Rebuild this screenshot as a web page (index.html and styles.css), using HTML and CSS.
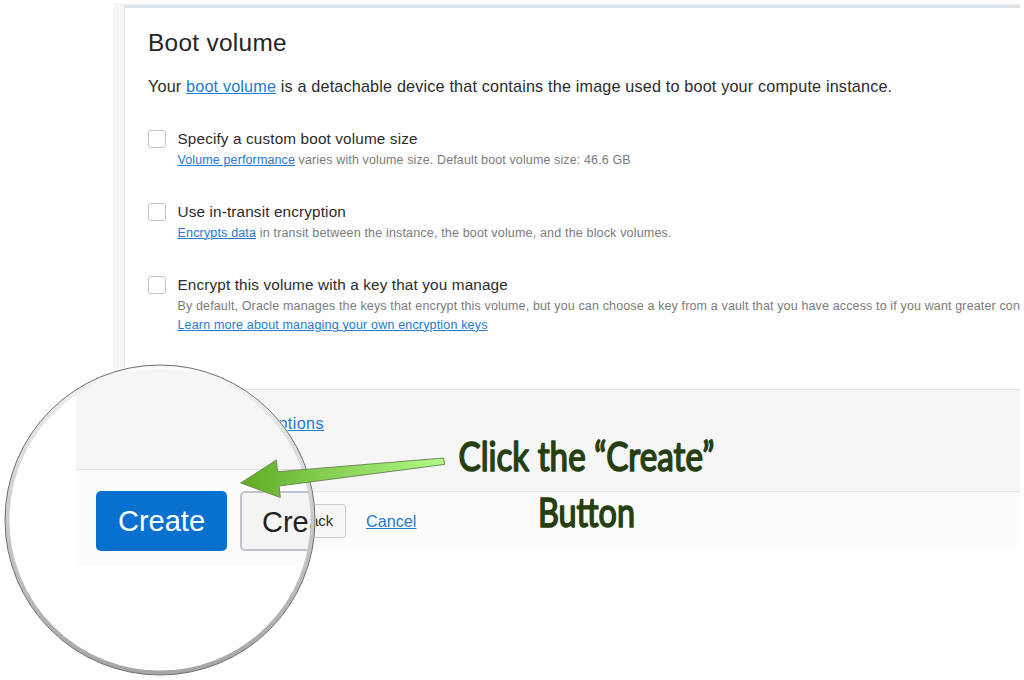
FILE: index.html
```html
<!DOCTYPE html>
<html lang="en">
<head>
<meta charset="utf-8">
<title>Boot volume</title>
<link rel="stylesheet" href="styles.css">
</head>
<body>
<div class="page">
  <main class="card">
    <h1 class="title">Boot volume</h1>
    <p class="intro">Your <a href="#">boot volume</a> is a detachable device that contains the image used to boot your compute instance.</p>
    <div class="option">
      <span class="box"></span>
      <div class="detail">
        <div class="label">Specify a custom boot volume size</div>
        <div class="hint"><a href="#">Volume performance</a> varies with volume size. Default boot volume size: 46.6 GB</div>
      </div>
    </div>
    <div class="option">
      <span class="box"></span>
      <div class="detail">
        <div class="label">Use in-transit encryption</div>
        <div class="hint wide"><a href="#">Encrypts data</a> in transit between the instance, the boot volume, and the block volumes.</div>
      </div>
    </div>
    <div class="option">
      <span class="box"></span>
      <div class="detail">
        <div class="label">Encrypt this volume with a key that you manage</div>
        <div class="hint long">By default, Oracle manages the keys that encrypt this volume, but you can choose a key from a vault that you have access to if you want greater con</div>
        <div class="hint wide"><a href="#">Learn more about managing your own encryption keys</a></div>
      </div>
    </div>
  </main>
  <section class="advanced"><a href="#">options</a></section>
  <footer class="actions">
    <span class="back">Back</span>
    <a class="cancel" href="#">Cancel</a>
  </footer>
</div>

<div class="lens">
  <div class="lens-view">
    <div class="lens-top"></div>
    <div class="lens-bar">
      <span class="big primary">Create</span>
      <span class="big secondary">Create</span>
    </div>
  </div>
  <svg class="lens-ring" viewBox="0 0 312 312">
    <defs>
      <linearGradient id="ring" x1="0" y1="0" x2="0" y2="1">
        <stop offset="0" stop-color="#fbfbfb"/>
        <stop offset=".12" stop-color="#e9e9e9"/>
        <stop offset=".5" stop-color="#cacaca"/>
        <stop offset="1" stop-color="#a6a6a6"/>
      </linearGradient>
    </defs>
    <circle cx="156" cy="156" r="152.7" fill="none" stroke="url(#ring)" stroke-width="4.2"/>
    <circle cx="156" cy="156" r="155" fill="none" stroke="#6c6c6c" stroke-width="1"/>
  </svg>
</div>

<svg class="notes" viewBox="0 0 1024 680">
  <defs>
    <linearGradient id="arrow" x1="0" y1="0" x2="1" y2="0">
      <stop offset="0" stop-color="#5eab22"/>
      <stop offset=".4" stop-color="#84cd50"/>
      <stop offset="1" stop-color="#b1fa86"/>
    </linearGradient>
  </defs>
  <path d="M240.7 483 276.3 460l1.3 11.7L443.7 458l.8 6.4L279 486l1.3 11.5Z" fill="url(#arrow)" stroke="#6d8d58" stroke-width="1"/>
  <g class="hand">
    <text x="458.5" y="471" textLength="256" lengthAdjust="spacingAndGlyphs">Click the “Create”</text>
    <text x="538" y="527" textLength="97" lengthAdjust="spacingAndGlyphs">Button</text>
  </g>
</svg>
</body>
</html>
```
FILE: styles.css
```css
* { box-sizing: border-box; }
body {
  margin: 0;
  width: 1024px;
  height: 680px;
  overflow: hidden;
  background: #fff;
  color: #2b2b2b;
  font-family: "Liberation Sans", Arial, sans-serif;
}
a { color: #2479d0; text-decoration: underline; text-underline-offset: 1px; text-decoration-thickness: 1px; }
.page {
  margin: 3px 4px 0 113px;
  height: 542px;
  background: #f6f6f6;
  display: flex;
  flex-direction: column;
}
.card {
  height: 384px;
  margin: 2px 0 0 11px;
  padding: 23px 0 0 23px;
  background: #fff;
  border-left: 1px solid #e3e5e6;
  border-top: 3px solid #dfe3e6;
  overflow: hidden;
  white-space: nowrap;
}
.title { margin: 0; font-size: 24.4px; font-weight: 400; line-height: 24px; letter-spacing: .3px; color: #242424; }
.intro { margin: 21px 0 0; font-size: 16.2px; line-height: 20px; letter-spacing: .17px; }
.option { display: flex; gap: 11.5px; height: 73px; }
.intro + .option { margin-top: 32px; }
.box { flex: none; width: 18px; height: 18px; margin-top: 2px; border: 1px solid #c0c5cb; border-radius: 3px; }
.label { margin-bottom: 2px; font-size: 15.3px; line-height: 21px; letter-spacing: .14px; }
.hint { font-size: 12.5px; line-height: 19px; letter-spacing: .12px; color: #7b7b7b; }
.wide { letter-spacing: .17px; }
.long { letter-spacing: .14px; }
.advanced { height: 103px; padding: 23px 0 0 156px; border-top: 1px solid #e3e3e3; border-bottom: 1px solid #e6e6e6; font-size: 16.2px; line-height: 20px; letter-spacing: .4px; }
.actions { flex: 1; display: flex; align-items: flex-start; gap: 20px; padding: 12px 0 0 163px; background: #fcfcfc; }
.back { width: 70px; height: 34px; padding-right: 12px; text-align: right; font-size: 14.7px; line-height: 32px; border: 1px solid #c9cdd2; border-radius: 3px; background: #f6f6f6; }
.cancel { font-size: 16.2px; line-height: 34px; }

.lens { position: absolute; left: 4px; top: 364px; width: 312px; height: 312px; background: #fff; border-radius: 50%; display: flex; }
.lens-view {
  width: 304px;
  height: 304px;
  margin: 4px;
  padding-left: 68px;
  border-radius: 50%;
  overflow: hidden;
  background: #fff;
}
.lens-top { height: 102px; background: #f6f6f6; border-bottom: 1px solid #dedede; }
.lens-bar { display: flex; gap: 13px; height: 96px; padding: 21px 0 0 20px; background: #fcfcfc; }
.big { flex: none; width: 131px; height: 60px; border-radius: 5px; font-size: 29px; line-height: 61px; text-align: center; }
.primary { background: #0871d0; color: #fff; }
.secondary { border: 2px solid #bfc4cb; background: #f4f4f4; color: #222; line-height: 58px; }
.lens-ring { position: absolute; left: 0; top: 0; width: 312px; height: 312px; }
.notes { position: absolute; left: 0; top: 0; width: 1024px; height: 680px; }
.hand text {
  font-family: Lato, "Open Sans", sans-serif;
  font-size: 41px;
  font-weight: 400;
  fill: #263f10;
  stroke: #263f10;
  stroke-width: 1.7px;
  stroke-linejoin: round;
}
```
